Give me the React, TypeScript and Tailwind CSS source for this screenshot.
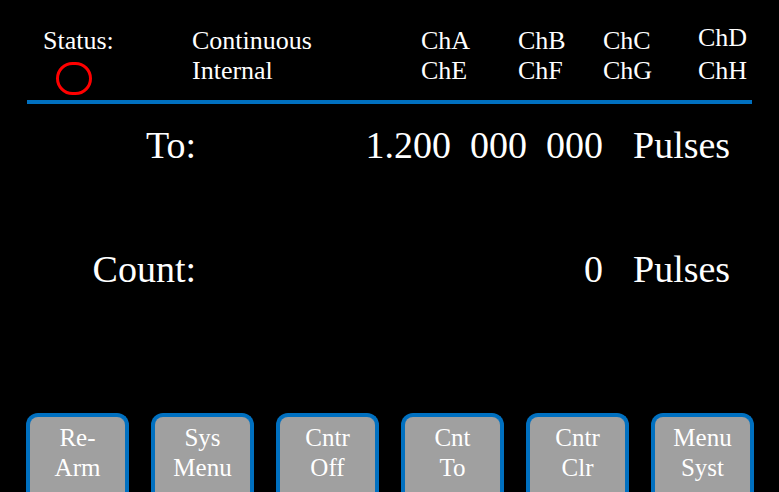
import React from 'react'

const channels = [
  ['ChA', 'ChE', 'w-[97px]'],
  ['ChB', 'ChF', 'w-[85px]'],
  ['ChC', 'ChG', 'w-[95px]'],
  ['ChD', 'ChH', 'w-[70px]'],
]

const buttons = [
  ['Re-', 'Arm'],
  ['Sys', 'Menu'],
  ['Cntr', 'Off'],
  ['Cnt', 'To'],
  ['Cntr', 'Clr'],
  ['Menu', 'Syst'],
]

const Row: React.FC<{ label: string; value: string; unit: string }> = ({ label, value, unit }) => (
  <div className="flex text-[38px] leading-[44px]">
    <div className="w-[196px] text-right">{label}</div>
    <div className="w-[407px] text-right whitespace-pre">{value}</div>
    <div className="pl-[30px]">{unit}</div>
  </div>
)

const App: React.FC = () => {
  return (
    <div className="w-[779px] h-[492px] bg-black text-white overflow-hidden flex flex-col font-[family-name:'Liberation_Serif',serif]">
      <header className="h-[100px] pt-[26px] pl-[43px] flex text-[26px] leading-[30px]">
        <div className="w-[149px]">
          <div>Status:</div>
          <div className="ml-[13px] mt-[6px] w-[36px] h-[33px] rounded-full border-[3.5px] border-[#ff0000]" />
        </div>
        <div className="w-[229px]">
          <div>Continuous</div>
          <div>Internal</div>
        </div>
        {channels.map(([a, b, w], i) => (
          <div key={a} className={w}>
            <div className={i === 3 ? '-mt-[3px] mb-[3px]' : ''}>{a}</div>
            <div>{b}</div>
          </div>
        ))}
      </header>
      <div className="ml-[27px] w-[725px] h-[4px] bg-[#0070c0]" />

      <main className="pt-[19px] flex flex-col gap-[80px]">
        <Row label="To:" value="1.200  000  000" unit="Pulses" />
        <Row label="Count:" value="0" unit="Pulses" />
      </main>

      <footer className="mt-auto pl-[26px] flex gap-[22px]">
        {buttons.map(([a, b], i) => (
          <div
            key={i}
            className="w-[103px] h-[79px] rounded-t-[12px] border-4 border-b-0 border-[#0070c0] bg-[#a0a0a0] pt-[6px] text-center text-[25px] leading-[30px]"
          >
            <div>{a}</div>
            <div>{b}</div>
          </div>
        ))}
      </footer>
    </div>
  )
}

export default App
